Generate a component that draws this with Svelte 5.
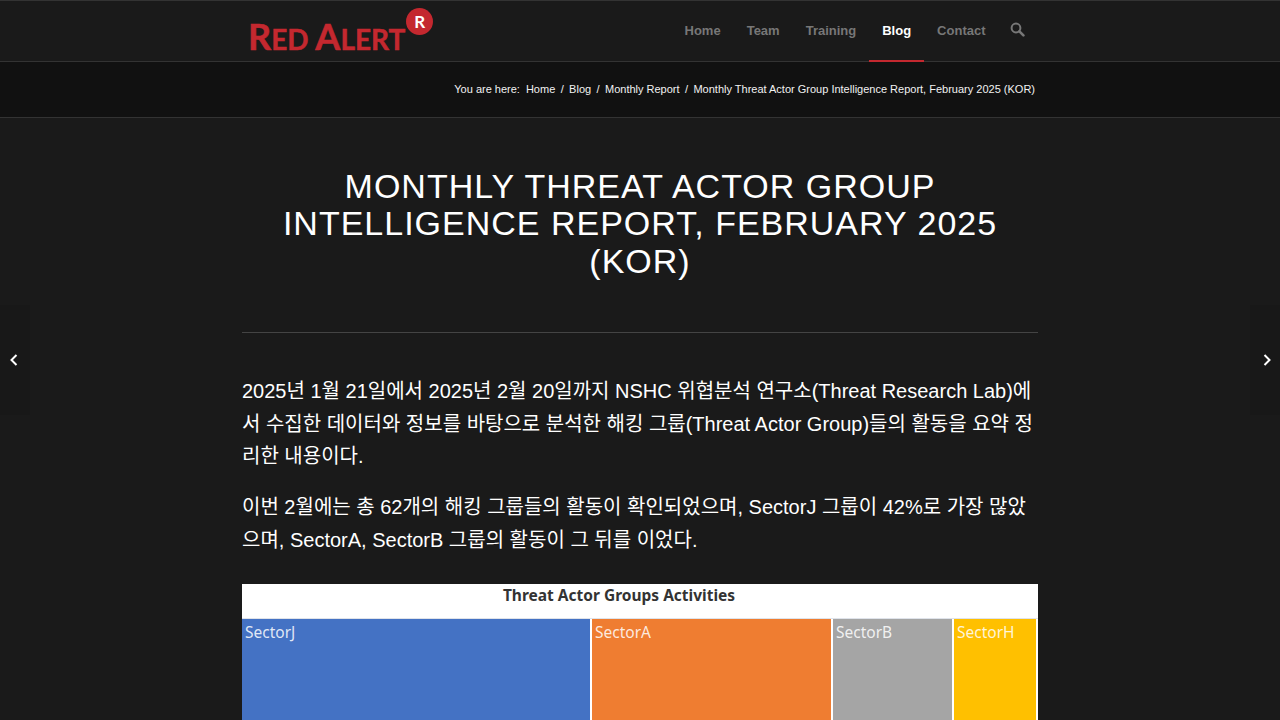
<script>
	const nav = [
		{ label: 'Home' },
		{ label: 'Team' },
		{ label: 'Training' },
		{ label: 'Blog', active: true },
		{ label: 'Contact' }
	];
	const crumbs = ['Home', 'Blog', 'Monthly Report'];
	const sectors = [
		{ name: 'SectorJ', color: '#4472c4', width: 348 },
		{ name: 'SectorA', color: '#ef7d31', width: 239 },
		{ name: 'SectorB', color: '#a5a5a5', width: 119 },
		{ name: 'SectorH', color: '#ffc000', width: 82 }
	];
</script>

<div class="page">
	<header class="topbar">
		<div class="container topbar-inner">
			<a class="logo" href="#home">
				<span class="logo-text"><span class="cap">R</span>ed <span class="cap">A</span>lert</span>
				<span class="logo-badge">R</span>
			</a>
			<nav class="main-nav" aria-label="Main">
				{#each nav as item}
					<a href="#{item.label}" class:active={item.active}>{item.label}</a>
				{/each}
				<a class="search" href="#search" aria-label="Search">
					<svg width="15" height="15" viewBox="0 0 15 15" fill="none" stroke="currentColor">
						<circle cx="6" cy="6" r="4.4" stroke-width="2" />
						<path d="M9.4 9.4 13.4 13.4" stroke-width="2.6" stroke-linecap="round" />
					</svg>
				</a>
			</nav>
		</div>
	</header>

	<div class="crumbbar">
		<div class="container crumbs">
			<span class="here">You are here:</span>
			{#each crumbs as crumb}
				<a href="#{crumb}">{crumb}</a>
				<span class="sep">/</span>
			{/each}
			<span>Monthly Threat Actor Group Intelligence Report, February 2025 (KOR)</span>
		</div>
	</div>

	<main class="container">
		<h1>Monthly Threat Actor Group<br />Intelligence Report, February 2025<br />(KOR)</h1>
		<hr />
		<p>2025년 1월 21일에서 2025년 2월 20일까지 NSHC 위협분석 연구소(Threat Research Lab)에서 수집한 데이터와 정보를 바탕으로 분석한 해킹 그룹(Threat Actor Group)들의 활동을 요약 정리한 내용이다.</p>
		<p>이번 2월에는 총 62개의 해킹 그룹들의 활동이 확인되었으며, SectorJ 그룹이 42%로 가장 많았으며, SectorA, SectorB 그룹의 활동이 그 뒤를 이었다.</p>
		<figure class="chart">
			<figcaption>Threat Actor Groups Activities</figcaption>
			<div class="treemap">
				{#each sectors as s}
					<div class="cell" style="background: {s.color}; width: {s.width}px">{s.name}</div>
				{/each}
			</div>
		</figure>
	</main>

	<a class="side prev" href="#prev" aria-label="Previous">
		<svg width="8" height="12" viewBox="0 0 8 12" fill="none" stroke="#fff" stroke-width="2"><path d="M6.5 1 1.5 6l5 5" /></svg>
	</a>
	<a class="side next" href="#next" aria-label="Next">
		<svg width="8" height="12" viewBox="0 0 8 12" fill="none" stroke="#fff" stroke-width="2"><path d="M1.5 1l5 5-5 5" /></svg>
	</a>
</div>

<style>
	:global(body) {
		background: #1a1a1a;
		font-family: "Liberation Sans", "Noto Sans CJK KR", sans-serif;
	}
	a { color: inherit; text-decoration: none; }

	.page {
		position: relative;
		height: 720px;
		overflow: hidden;
		background: #1a1a1a;
	}
	.container {
		width: 796px;
		margin: 0 auto;
	}

	/* Header */
	.topbar {
		height: 60px;
		border-top: 1px solid #333;
		border-bottom: 1px solid #333;
	}
	.topbar-inner {
		display: flex;
		justify-content: space-between;
		height: 100%;
	}
	.logo {
		display: flex;
		align-items: flex-start;
		padding: 7px 0 0 6px;
		color: #c4282f;
	}
	.logo-text {
		margin-top: 10px;
		font-family: Lato, sans-serif;
		font-size: 28px;
		line-height: 36px;
		font-weight: 700;
		-webkit-text-stroke: 0.5px #c4282f;
		text-transform: uppercase;
		white-space: nowrap;
	}
	.cap { font-size: 36px; }
	.logo-badge {
		width: 27px;
		height: 27px;
		margin-left: 1px;
		border-radius: 50%;
		background: #c4282f;
		color: #fff;
		font-family: Lato, sans-serif;
		font-size: 17px;
		font-weight: 700;
		line-height: 27px;
		text-align: center;
	}
	.main-nav {
		display: flex;
		font-size: 13px;
		font-weight: 700;
		color: #777;
	}
	.main-nav a {
		display: flex;
		align-items: center;
		padding: 0 13px;
		border-bottom: 2px solid transparent;
		box-sizing: border-box;
		height: 61px;
	}
	.main-nav a.active {
		color: #fff;
		border-bottom-color: #c4282f;
	}
	.main-nav .search { padding: 0 13px 3px 11.5px; }

	/* Breadcrumb */
	.crumbbar {
		height: 55px;
		background: #111;
		border-bottom: 1px solid #333;
	}
	.crumbs {
		display: flex;
		justify-content: flex-end;
		align-items: center;
		height: 100%;
		padding: 0 3px 2px 0;
		box-sizing: border-box;
		font-size: 11px;
		color: #f2f2f2;
		white-space: nowrap;
	}
	.here { margin-right: 6px; }
	.sep { margin: 0 5.4px; }

	/* Article */
	h1 {
		margin: 50px 0 0;
		font-size: 34px;
		line-height: 37.4px;
		font-weight: 400;
		letter-spacing: 1px;
		text-transform: uppercase;
		text-align: center;
		color: #fff;
	}
	hr {
		margin: 52px 0 42px;
		border: 0;
		border-top: 1px solid #444;
	}
	p {
		margin: 0 0 19px;
		font-size: 20px;
		line-height: 32.4px;
		color: #fff;
	}
	.chart {
		margin: 28px 0 0;
		background: #fff;
	}
	figcaption {
		height: 34px;
		padding-right: 42px;
		font-family: "Noto Sans", sans-serif;
		font-size: 15.5px;
		font-weight: 700;
		line-height: 22px;
		text-align: center;
		color: #333;
	}
	.treemap {
		display: flex;
		gap: 2px;
		height: 200px;
		background: #fff;
		border-top: 1px solid #dfe3ea;
	}
	.cell {
		flex: none;
		padding: 2px 3px;
		box-sizing: border-box;
		font-family: "Noto Sans", sans-serif;
		font-size: 15.5px;
		color: rgba(255, 255, 255, 0.85);
	}

	/* Side arrows */
	.side {
		position: absolute;
		top: 305px;
		width: 30px;
		height: 110px;
		display: flex;
		align-items: center;
		background: #181818;
	}
	.prev { left: 0; padding-left: 9.5px; box-sizing: border-box; }
	.next { right: 0; padding-left: 13px; box-sizing: border-box; }
</style>
